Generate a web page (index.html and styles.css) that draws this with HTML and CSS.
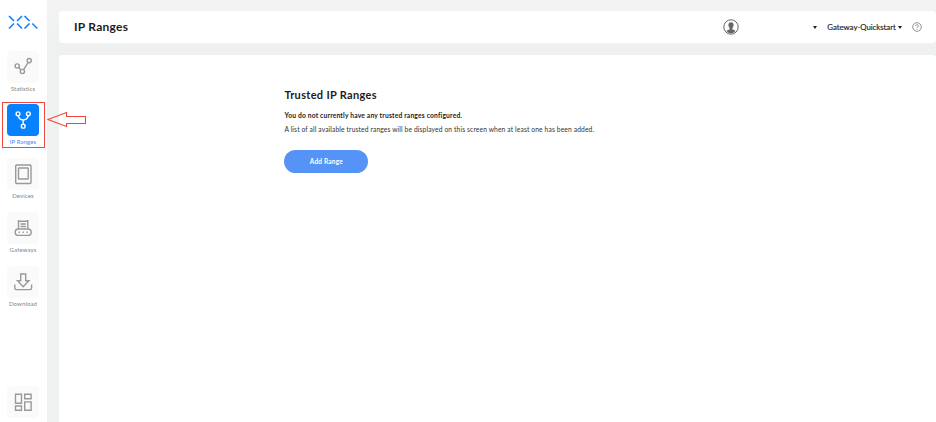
FILE: index.html
```html
<!DOCTYPE html>
<html lang="en">
<head>
<meta charset="utf-8">
<title>IP Ranges</title>
<link rel="stylesheet" href="styles.css">
</head>
<body>
<div class="app">
  <nav class="sidebar">
    <svg class="logo" viewBox="0 0 30 15" width="30" height="15">
      <path d="M1 1l5 5M14 1L9 6M1 13.500l5-5M14 13.500l-5-5M16.500 1l5 5M21.500 8.500l-5 5M24.300 8.500l5 5"/>
    </svg>
    <a class="item">
      <span class="tile"><svg viewBox="0 0 32 32"><circle cx="10.200" cy="15" r="2.100"/><circle cx="15.400" cy="20.500" r="2.100"/><circle cx="22.200" cy="9.600" r="2.100"/><path d="M11.700 16.600l2.100 2.200M16.600 18.600l4.400-7"/></svg></span>
      <span class="label">Statistics</span>
    </a>
    <a class="item active">
      <span class="tile"><svg viewBox="0 0 32 32"><circle cx="11" cy="9.800" r="1.900"/><circle cx="21.400" cy="9.800" r="1.900"/><circle cx="16.200" cy="22.200" r="1.900"/><path d="M11.300 11.800c.3 2.400 2 3.800 4.900 4.200c2.900-.4 4.600-1.800 4.900-4.200M16.200 16v4.200"/></svg></span>
      <span class="label">IP Ranges</span>
    </a>
    <a class="item">
      <span class="tile"><svg viewBox="0 0 32 32"><rect x="8.700" y="7" width="15.300" height="18.500" rx="1"/><rect x="11.500" y="10" width="9.700" height="11" rx=".5"/></svg></span>
      <span class="label">Devices</span>
    </a>
    <a class="item">
      <span class="tile"><svg viewBox="0 0 32 32"><rect x="8.200" y="17" width="16" height="6.400" rx="3.200"/><path d="M11.500 8v9M20.800 8v9M11.500 9.300h9.300M13.500 12h5.400M13.500 14.500h5.400"/><path d="M11.500 20.200h1.400M15.500 20.200h1.400M19.500 20.200h1.400"/></svg></span>
      <span class="label">Gateways</span>
    </a>
    <a class="item">
      <span class="tile"><svg viewBox="0 0 32 32"><path d="M13.700 8h5v6.800h3.200l-5.700 6l-5.700-6h3.200zM7.800 18.500v3.600q0 1.500 1.500 1.500h13.800q1.500 0 1.500-1.500v-3.600"/></svg></span>
      <span class="label">Download</span>
    </a>
    <a class="item last">
      <span class="tile"><svg viewBox="0 0 32 32"><path d="M8.500 8.200h6v9h-6zM17.700 8.200h6.400v4.600h-6.400zM8.500 20h6v4.200h-6zM17.700 15.900h6.400v8.300h-6.400z"/></svg></span>
    </a>
  </nav>
  <main class="main">
    <header class="topbar">
      <h1>IP Ranges</h1>
      <svg class="avatar" viewBox="0 0 16 16"><circle cx="8" cy="8" r="7.200"/><path d="M8 3.200c-2 0-2.800 1.400-2.600 3.100c.1 1.300.6 2 1.200 2.700v1.600c-1.300.3-2.400.6-3.100 1.500A6.500 6.500 0 0 0 8 14.500a6.500 6.500 0 0 0 4.500-2.400c-.7-.9-1.800-1.200-3.100-1.500V9c.6-.7 1.100-1.400 1.200-2.700c.2-1.700-.6-3.100-2.600-3.100z"/></svg>
      <i class="caret first"></i>
      <span class="account">Gateway-Quickstart</span>
      <i class="caret"></i>
      <svg class="help" viewBox="0 0 10 10"><circle cx="5" cy="5" r="4.300"/><path d="M3.700 4a1.300 1.300 0 1 1 2 1.100q-.7.400-.7.900M5 6.800v.7"/></svg>
    </header>
    <section class="panel">
      <h2>Trusted IP Ranges</h2>
      <p class="strong">You do not currently have any trusted ranges configured.</p>
      <p class="note">A list of all available trusted ranges will be displayed on this screen when at least one has been added.</p>
      <button>Add Range</button>
    </section>
  </main>
  <svg class="arrow" viewBox="0 0 40 18"><path d="M1 8.500L19.500 1.500V5.500H38.500V12.500H19.500V15.500Z"/></svg>
</div>
</body>
</html>
```

FILE: styles.css
```css
*, *::after { box-sizing: border-box; }
body { margin: 0; font-family: Lato, "Liberation Sans", sans-serif; background: #eff1f1; color: #1c1c1e; }
.app { display: flex; height: 422px; position: relative; overflow: hidden; }
.sidebar { width: 47px; background: #fff; display: flex; flex-direction: column; align-items: center; padding: 15px 1px 0 0; }
.logo { fill: none; stroke: #1683ff; stroke-width: 1.700; margin-bottom: 20.500px; flex: none; }
.item { width: 42px; height: 53.900px; display: flex; flex-direction: column; align-items: center; flex: none; }
.tile { width: 32px; height: 32px; border-radius: 4px; background: #fafafa; flex: none; }
.tile svg { display: block; width: 32px; height: 32px; fill: none; stroke: #999; stroke-width: 1.400; }
.label { font-size: 6px; line-height: 8px; margin-top: 2px; letter-spacing: .12px; color: #858585; white-space: nowrap; }
.active { position: relative; }
.active::after { content: ""; position: absolute; left: 0; top: -2.500px; width: 43px; height: 46px; border: 1px solid #f0483e; }
.active .tile { background: #0681ff; }
.active .tile svg { stroke: #fff; }
.active .label { color: #4a87ef; }
.last { margin-top: auto; height: 36px; }
.main { flex: 1; padding: 11px 0 0 12px; display: flex; flex-direction: column; gap: 12px; background: linear-gradient(#f3f3f3, #eff1f1 45px); }
.topbar { height: 32px; background: #fff; border-radius: 4px; display: flex; align-items: center; padding: 0 14px 0 15px; }
h1 { margin: 0 auto 0 0; font-size: 12px; line-height: 16px; font-weight: 700; letter-spacing: .25px; }
.avatar { width: 16px; height: 16px; fill: #666; margin-right: 74px; }
.avatar circle { fill: #fff; stroke: #666; stroke-width: 1; }
.caret { border: 2.500px solid transparent; border-top: 3px solid #222; border-bottom: 0; }
.caret.first { margin-right: 10px; }
.account { font-size: 7.750px; line-height: 12px; margin-right: 2px; -webkit-text-stroke: .15px; }
.help { width: 10px; height: 10px; fill: none; stroke: #777; stroke-width: .8; margin-left: 10.200px; }
.panel { flex: 1; background: #fff; border-radius: 4px 4px 0 0; padding: 33px 0 0 225.400px; }
h2 { font-size: 11px; line-height: 14px; margin: 0; letter-spacing: .32px; }
p { margin: 0; font-size: 6.700px; line-height: 10px; white-space: nowrap; }
.strong { font-weight: 700; margin-top: 7.500px; letter-spacing: .18px; }
.note { margin-top: 4px; color: #333; letter-spacing: .13px; }
button { display: block; margin-top: 16.500px; width: 84px; height: 23px; border: 0; border-radius: 12px; background: #5593f7; color: #fff; font: 700 6.500px/23px Lato, sans-serif; letter-spacing: .2px; padding: 0; }
.arrow { position: absolute; left: 47px; top: 111px; width: 40px; height: 18px; fill: none; stroke: #f0483e; stroke-width: 1.100; }
```
